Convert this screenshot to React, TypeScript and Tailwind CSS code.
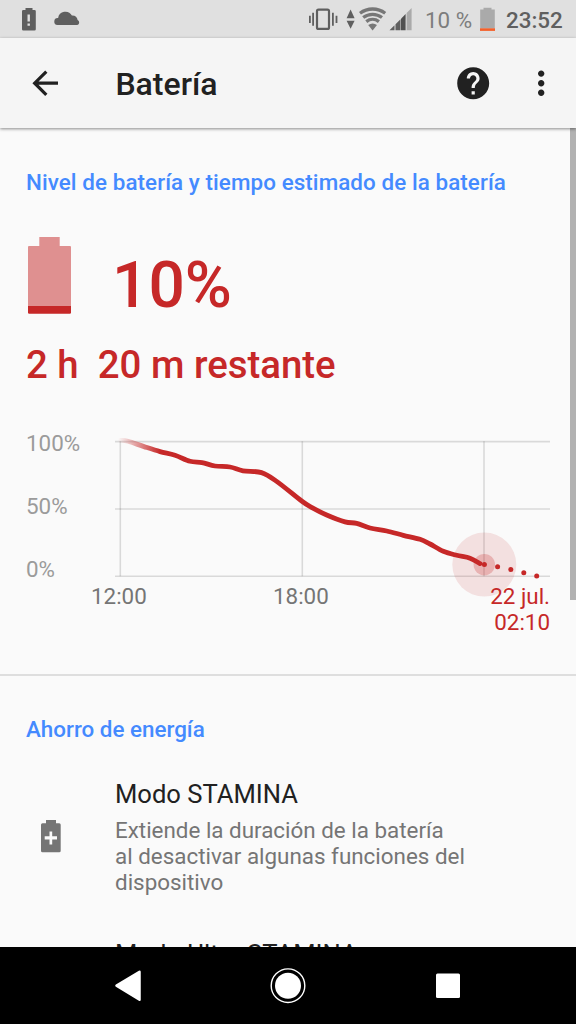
import React from 'react';
import { MdArrowBack, MdHelp, MdMoreVert } from 'react-icons/md';

type Point = [number, number];

// Battery history, in chart coordinates (top grid line at y = 10)
const HISTORY: Point[] = [
  [6, 9], [14, 10], [30, 15.3], [46, 20.3], [61, 24], [76, 30], [88, 31.3],
  [101, 34.7], [116, 35.7], [129, 39.5], [147.5, 41.3], [163, 50.3],
  [188, 70], [198, 76.3], [212.7, 83.7], [231, 90.6], [242.7, 92],
  [256, 96.7], [272.7, 99.7], [289.3, 104], [306, 108], [316, 112.7],
  [329.3, 120], [342.7, 124], [356, 126.9], [366, 132.3],
];

const PROJECTION: Point[] = [
  [370.4, 133.3], [383.6, 135.5], [396.8, 138.2], [409.8, 141.4], [422.7, 144.8],
];

const smoothPath = (points: Point[]): string => {
  let d = `M${points[0][0]} ${points[0][1]}`;
  for (let i = 0; i < points.length - 1; i++) {
    const p0 = points[i - 1] || points[i];
    const p1 = points[i];
    const p2 = points[i + 1];
    const p3 = points[i + 2] || p2;
    d += ` C${p1[0] + (p2[0] - p0[0]) / 6} ${p1[1] + (p2[1] - p0[1]) / 6} ${p2[0] - (p3[0] - p1[0]) / 6} ${p2[1] - (p3[1] - p1[1]) / 6} ${p2[0]} ${p2[1]}`;
  }
  return d;
};

const StatusBar: React.FC = () => (
  <div className="flex h-[38px] shrink-0 items-center justify-between bg-[#e0e0e0] text-[#5f5f5f]">
    <svg width="100" height="38" fill="currentColor">
      <path
        fillRule="evenodd"
        d="M25.5 8h7v2h2q1.3 0 1.3 1.3v18q0 1.3-1.3 1.3H23.3Q22 30.6 22 29.3v-18Q22 10 23.3 10h2.2zM27.5 14.5v7h2.4v-7zM27.5 23.5v2.3h2.4v-2.3z"
      />
      <path d="M57.5 25a3.5 3.5 0 0 1 .6-7 7.4 7.4 0 0 1 13.8-2.4c3.300-.2 5.400 1.800 5.700 4.500a2.600 2.600 0 0 1-.3 4.900z" />
    </svg>
    <div className="flex h-full items-center">
      <svg width="120" height="38" fill="currentColor">
        <rect x="14" y="9.6" width="12" height="19.3" rx="1.5" fill="none" stroke="currentColor" strokeWidth="2.2" />
        <path d="M9.2 12.7H11v13H9.2zM6 15.700h1.800v7.200H6zM29 12.700h1.800v13H29zM32.600 15.700h1.800v7.200h-1.800z" />
        <path d="M43.600 18.200l4-8.600 4 8.600zM43.600 20.700h8l-4 8z" />
        <g fill="none" stroke="#777" strokeWidth="3.3">
          <path d="M57 13.200a21 21 0 0 1 25.200 0" />
          <path d="M60.200 17.500a15.500 15.500 0 0 1 18.800 0" />
          <path d="M63.300 21.600a10.300 10.300 0 0 1 12.600 0" />
        </g>
        <path d="M65.200 24.900q4.400-3 8.800 0l-4.400 5.600z" fill="#777" />
        <path d="M86.500 30.300l5-5v5zM92.500 24.200l5-5v11.1h-5z" />
        <path d="M98 18.700l4.600-4.800v16.4H98z" fill="#505050" />
        <path d="M103.600 13l5-5v22.3h-5z" fill="#aaa" />
      </svg>
      <span className="w-[51.5px] whitespace-pre pl-[2px] pt-[2px] text-[22.4px] leading-[38px] text-[#7d7d7d]">10 %</span>
      <svg width="31.5" height="38">
        <path d="M8.5 7.7h8v1.8h3.3v19H5.2v-19h3.3z" fill="#aaa" />
        <path d="M5 28.3h15v2.6H5z" fill="#f4602a" />
      </svg>
      <span className="w-[70px] pt-[2px] text-[22.4px] font-medium leading-[38px]">23:52</span>
    </div>
  </div>
);

const AppBar: React.FC = () => (
  <header className="z-10 flex h-[90px] shrink-0 items-center bg-[#f5f5f5] pl-[26px] pr-[16px] text-[#212121] shadow-[0_1px_3px_rgba(0,0,0,0.45)]">
    <MdArrowBack size={38.4} />
    <h1 className="ml-[51px] flex-1 pt-[2px] text-[32px] font-medium leading-[38px]">Batería</h1>
    <MdHelp size={38.4} />
    <MdMoreVert size={38.4} className="ml-[29px]" />
  </header>
);

const BatteryChart: React.FC = () => (
  <div className="mt-[43px] flex h-[152px] justify-between">
    <div className="flex w-[88px] flex-col justify-between text-[#9b9b9b]">
      <span>100%</span>
      <span>50%</span>
      <span>0%</span>
    </div>
    <svg width="436" height="168" viewBox="0 -1.3 436 168" className="w-[436px] shrink-0 overflow-visible">
      <defs>
        <linearGradient id="fade" gradientUnits="userSpaceOnUse" x1="4" y1="0" x2="46" y2="0">
          <stop offset="0" stopColor="#c62828" stopOpacity="0" />
          <stop offset="1" stopColor="#c62828" />
        </linearGradient>
      </defs>
      <g stroke="#000" strokeOpacity="0.13" strokeWidth="1.6">
        <path d="M1 10.3H436M1 77.7H436M1 145H436" />
        <path d="M6.3 10V145M188.3 10V145M370 10V145" />
      </g>
      <circle cx="370.3" cy="133.3" r="32" fill="#c62828" fillOpacity="0.12" />
      <circle cx="370.3" cy="133.3" r="10.7" fill="#c62828" fillOpacity="0.25" />
      <path d={smoothPath(HISTORY)} fill="none" stroke="url(#fade)" strokeWidth="4.8" strokeLinecap="round" strokeLinejoin="round" />
      {PROJECTION.map(([x, y]) => (
        <circle key={x} cx={x} cy={y} r="2.5" fill="#c62828" />
      ))}
    </svg>
  </div>
);

const BatteryLevel: React.FC = () => (
  <section className="h-[548px] shrink-0 border-b-2 border-[#dedede] px-[26px] pt-[41px]">
    <h2 className="font-medium tracking-[0.08px] text-[#448aff]">Nivel de batería y tiempo estimado de la batería</h2>
    <div className="mt-[42px] flex h-[78px] text-[#c62828]">
      <svg width="45" height="78" className="mr-[19px]">
        <path d="M13.3 0h20.4v9H44q1 0 1 1v59H2V10q0-1 1-1h10.3z" fill="#df9090" />
        <path d="M2 69h43v6.5q0 1.2-1.2 1.2H3.2Q2 76.7 2 75.5z" fill="#c62828" />
      </svg>
      <span className="ml-[22px] mt-[11px] text-[64px] font-medium leading-[75px]">10%</span>
    </div>
    <p className="mt-[27px] whitespace-pre text-[38.4px] font-medium leading-[45px] text-[#c62828]">{'2 h  20 m restante'}</p>
    <BatteryChart />
    <div className="mt-px flex justify-between pl-[65px] text-[#757575]">
      <span className="w-[182px]">12:00</span>
      <span className="flex-1">18:00</span>
      <span className="text-right text-[#c62828]">
        22 jul.
        <br />
        02:10
      </span>
    </div>
  </section>
);

const PowerSaving: React.FC = () => (
  <section className="pt-[40px]">
    <h2 className="px-[26px] font-medium text-[#448aff]">Ahorro de energía</h2>
    <div className="mt-[37px] flex pl-[41px]">
      <svg width="20" height="33" className="mt-[40.5px] shrink-0">
        <path
          fillRule="evenodd"
          fill="#757575"
          d="M5 0h10v3.3h3.2q1.5 0 1.5 1.5v26q0 1.5-1.5 1.5H1.5Q0 32.3 0 30.8v-26q0-1.5 1.5-1.500H5zM8.500 11.500v4.800H3.700v3.300h4.800v4.800h2.700v-4.800H16v-3.300h-4.800v-4.800z"
        />
      </svg>
      <div className="ml-[54px]">
        <h3 className="text-[25.6px] leading-[30px] text-[#212121]">Modo STAMINA</h3>
        <p className="mt-[8px] leading-[26px] text-[#757575]">
          Extiende la duración de la batería
          <br />
          al desactivar algunas funciones del
          <br />
          dispositivo
        </p>
      </div>
    </div>
    <h3 className="mt-[44px] pl-[115px] text-[25.6px] leading-[30px] text-[#212121]">Modo Ultra STAMINA</h3>
  </section>
);

const NavBar: React.FC = () => (
  <nav className="h-[77px] shrink-0 bg-black">
    <svg width="576" height="77" fill="#fff">
      <path d="M139.5 24.8L116.5 38.6L139.5 52.8z" stroke="#fff" strokeWidth="2.5" strokeLinejoin="round" />
      <circle cx="288" cy="38.7" r="13" />
      <circle cx="288" cy="38.7" r="16.8" fill="none" stroke="#fff" strokeWidth="1.4" />
      <rect x="436" y="26.5" width="24" height="24.5" rx="1.5" />
    </svg>
  </nav>
);

const App: React.FC = () => {
  return (
    <div className="flex h-[1024px] w-[576px] flex-col overflow-hidden bg-[#fafafa] font-['Roboto',sans-serif] text-[22.4px] leading-[26px]">
      <StatusBar />
      <AppBar />
      <main className="relative min-h-0 flex-1 overflow-hidden">
        <BatteryLevel />
        <PowerSaving />
        <div className="absolute right-0 top-0 h-[472px] w-[6.4px] bg-[#b2b2b2]" />
      </main>
      <NavBar />
    </div>
  );
};

export default App;
